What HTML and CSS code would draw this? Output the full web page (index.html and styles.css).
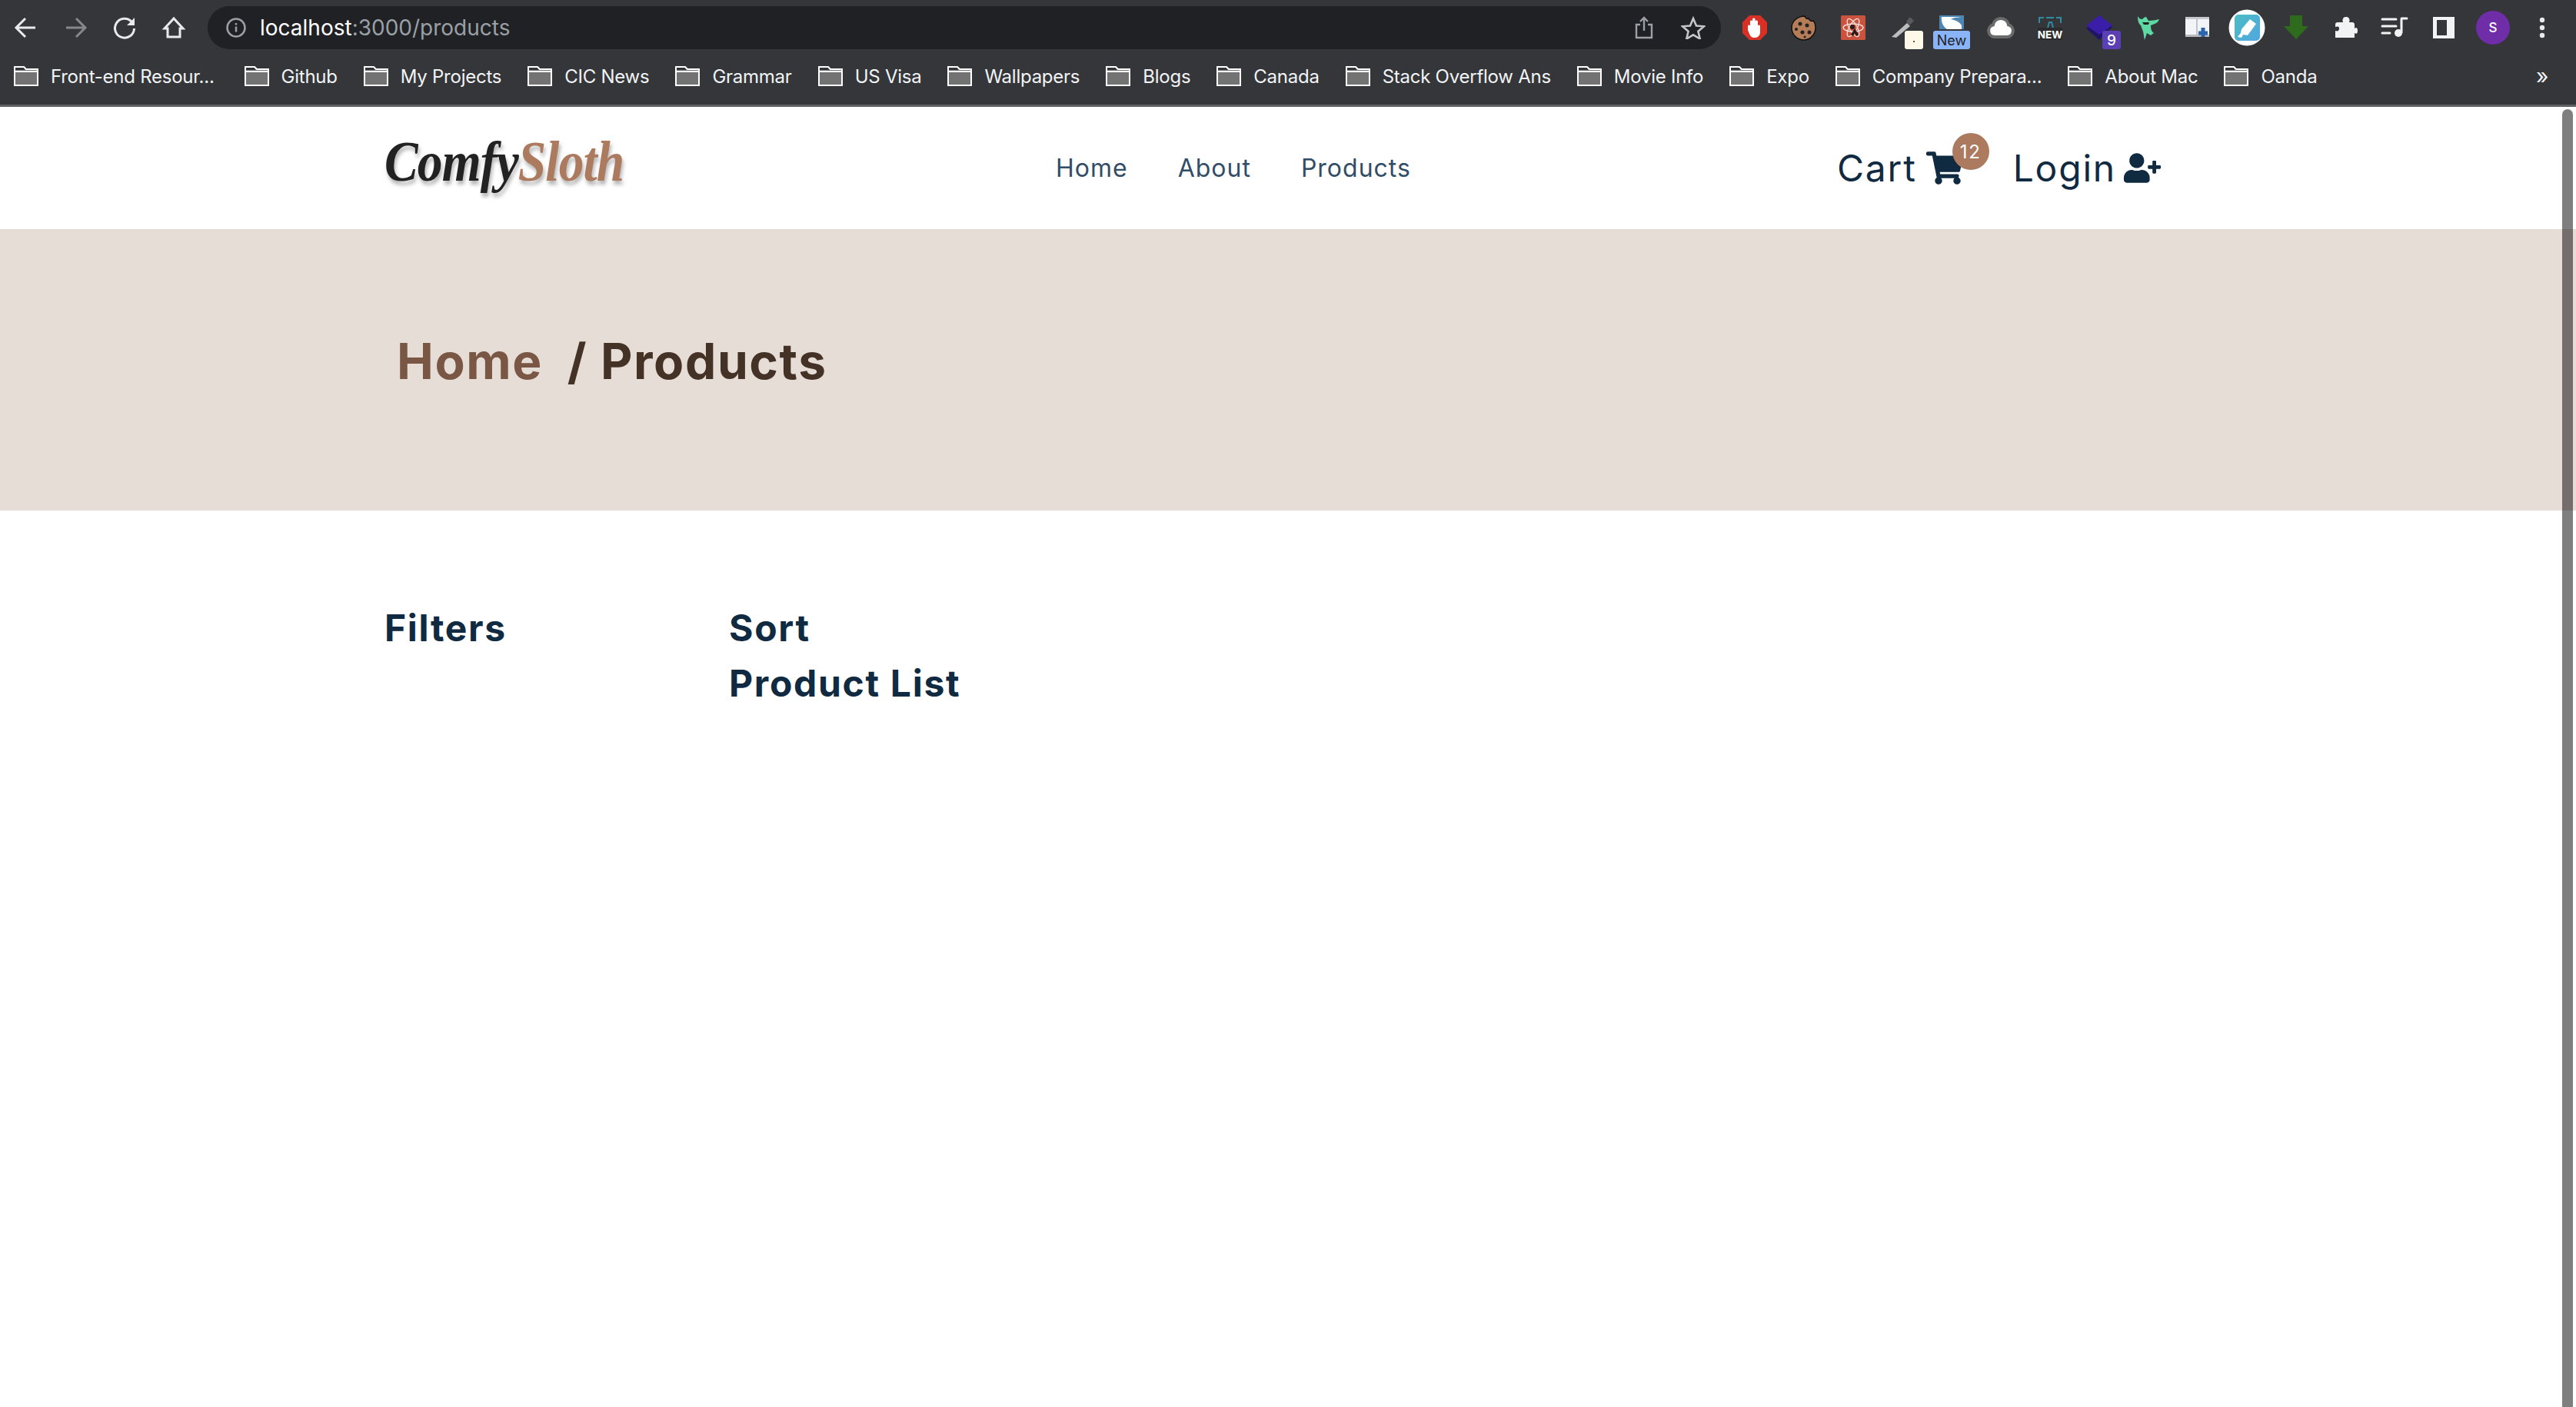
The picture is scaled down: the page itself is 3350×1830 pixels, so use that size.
FILE: index.html
```html
<!DOCTYPE html>
<html lang="en">
<head>
<meta charset="utf-8">
<title>Comfy Sloth | Products</title>
<link rel="stylesheet" href="styles.css">
</head>
<body>
<svg class="defs" width="0" height="0" aria-hidden="true">
  <symbol id="folder" viewBox="0 0 32 26">
    <path d="M1 1h12l3 3h15v21H1z" fill="#737373" stroke="#fff" stroke-width="2"/>
    <path d="M1 7h30" stroke="#fff" stroke-width="2"/>
    <path d="M2 2h10.500l2 3H2z" fill="#35363a"/>
  </symbol>
</svg>
<header class="chrome">
  <div class="toolbar">
    <div class="nav-buttons">
      <svg class="tb-icon" viewBox="0 0 64 72"><path d="M44 36H20M31 24L19 36l12 12" fill="none" stroke="#e8eaed" stroke-width="3"/></svg>
      <svg class="tb-icon" viewBox="0 0 64 72"><path d="M20 36h24M33 24l12 12-12 12" fill="none" stroke="#85878a" stroke-width="3"/></svg>
      <svg class="tb-icon" viewBox="0 0 64 72"><path d="M41 28a12.500 12.500 0 1 0 3.500 9" fill="none" stroke="#e8eaed" stroke-width="3"/><path d="M45 23v10H35z" fill="#e8eaed"/></svg>
      <svg class="tb-icon" viewBox="0 0 64 72"><path d="M20 37l12-13 12 13h-4v11H24V37z" fill="none" stroke="#e8eaed" stroke-width="3"/></svg>
    </div>
    <div class="omnibox">
      <svg class="omni-info" viewBox="0 0 28 28"><circle cx="14" cy="14" r="11.500" fill="none" stroke="#9aa0a6" stroke-width="2.500"/><path d="M14 12.500v7M14 8v2.500" stroke="#9aa0a6" stroke-width="2.500"/></svg>
      <span class="url"><span class="url-host">localhost</span>:3000/products</span>
      <svg class="omni-share" viewBox="0 0 24 30"><path d="M7 11H2v17h20V11h-5M12 19V2M7 7l5-5 5 5" fill="none" stroke="#9aa0a6" stroke-width="2.400"/></svg>
      <svg class="omni-star" viewBox="0 0 32 30"><path d="M16 3l4 9.500 10 .8-7.600 6.500 2.300 9.700L16 24.300l-8.700 5.200 2.300-9.700L2 13.300l10-.8z" fill="none" stroke="#c4c7c9" stroke-width="2.600"/></svg>
    </div>
    <div class="extensions">
      <svg class="ext" viewBox="0 0 64 72"><path d="M25 20h14l9 9v14l-9 9H25l-9-9V29z" fill="#d93025"/><path d="M23 34c0-2 3-2 3 0v-6c0-2 3-2 3 0v-3c0-2 3.500-2 3.500 0v3c0-2 3.500-2 3.500 0v6c0-2 3-2 3 0v8c0 4-3 7-7 7-4 0-6-2-7-5l-2-5z" fill="#fff"/></svg>
      <svg class="ext" viewBox="0 0 64 72"><path d="M33 21c1 3 3 4 5 3 1 3 4 4 6 3 3 3 3 6 3 9 0 9-7 16-15 16-9 0-16-7-16-16 0-8 7-15 17-15z" fill="#b47c57" stroke="#111" stroke-width="1.500"/><g fill="#222"><circle cx="27" cy="31" r="2.500"/><circle cx="36" cy="33" r="2.500"/><circle cx="22" cy="38" r="2"/><circle cx="30" cy="42" r="2.500"/><circle cx="39" cy="42" r="2.500"/><circle cx="33" cy="48" r="1.500"/></g></svg>
      <svg class="ext" viewBox="0 0 64 72"><rect x="16" y="20" width="32" height="32" rx="1.500" fill="#c9533f"/><g fill="none" stroke="#f6e3de" stroke-width="1.300"><ellipse cx="32" cy="36" rx="13" ry="5"/><ellipse cx="32" cy="36" rx="13" ry="5" transform="rotate(60 32 36)"/><ellipse cx="32" cy="36" rx="13" ry="5" transform="rotate(120 32 36)"/></g><circle cx="31" cy="35" r="3" fill="#2a1a18"/><path d="M34 37l5 8-3 2-2-4-2 4-3-2z" fill="#2a1a18"/></svg>
      <svg class="ext" viewBox="0 0 64 72"><path d="M38 30l4 4-18 15-6-1z" fill="#bdbdbd"/><path d="M37 28l5-6 5 5-6 6z" fill="#5a5a5a"/><rect class="ext-badge-cream" x="35" y="40" width="24" height="24" rx="3"/><circle cx="47" cy="54" r="1" fill="#222"/></svg>
      <svg class="ext" viewBox="0 0 64 72"><rect x="16" y="20" width="32" height="18" fill="#4e86b3"/><path d="M19 22h25c-6 1-11 1-13 3 5 1 11 3 14 8v5H26c-4-3-8-8-7-16z" fill="#fff"/><rect x="8" y="40" width="48" height="24" rx="3" fill="#8ab4f8"/><text class="ext-new" x="32" y="59" text-anchor="middle">New</text></svg>
      <svg class="ext" viewBox="0 0 64 72"><path d="M24 48a8 8 0 0 1-2-15.700c1-5 5-8.300 10-8.300s9 3.300 10 8.300A8 8 0 0 1 40 48z" fill="#fff" stroke="#6b6b6b" stroke-width="4"/></svg>
      <svg class="ext" viewBox="0 0 64 72"><path d="M18 30v-7h6M40 23h6v7M27 23h10" fill="none" stroke="#2e8ba0" stroke-width="2"/><path d="M29 36l2-7h3l2 7" fill="none" stroke="#2e8ba0" stroke-width="2"/><rect x="16" y="36" width="32" height="16" fill="#2c2c2e"/><text class="ext-word" x="32" y="49.500" text-anchor="middle">NEW</text></svg>
      <svg class="ext" viewBox="0 0 64 72"><path d="M32 20l17 15-17 17-17-15z" fill="#1f1466"/><path d="M32 20l17 13-17 12-17-12z" fill="#3a1ea8"/><rect x="36" y="40" width="24" height="24" rx="3" fill="#5b3fb5"/><text class="ext-count" x="48" y="59" text-anchor="middle">9</text></svg>
      <svg class="ext" viewBox="0 0 64 72"><path d="M18 21c2 3 3 4 6 4 2-2 3-3 5-3l3 5c5 0 9-1 14-2-1 3-3 5-6 6l-5 2c0 5 1 8 4 10l-4 3-5-3-3 9c-1-3-1-7-2-11l-3-8c-3-2-4-7-4-12z" fill="#5fd9a4"/><path d="M24 29h9l-1 3h-6z" fill="#222"/></svg>
      <svg class="ext" viewBox="0 0 64 72"><rect x="16" y="22" width="31" height="26" fill="#f2f4f8"/><rect x="16" y="22" width="31" height="3" fill="#c7c9cc"/><path d="M31 25v23" stroke="#aeb4bb" stroke-width="1.500"/><rect x="16" y="45" width="31" height="3" fill="#b8babc"/><path d="M39 36v12M33 43h12" stroke="#2a65ad" stroke-width="5"/></svg>
      <svg class="ext" viewBox="0 0 64 72"><defs><linearGradient id="pen-bg" x1="0" y1="0" x2="1" y2="1"><stop offset="0" stop-color="#4bbcc4"/><stop offset="1" stop-color="#51a7e0"/></linearGradient></defs><circle cx="32" cy="36" r="23.500" fill="#fff"/><rect x="16" y="19" width="33" height="34" rx="5" fill="url(#pen-bg)"/><path d="M36 25l8 6-11 15-6-1-2 4-5-1 4-5 1-5z" fill="#fff"/></svg>
      <svg class="ext" viewBox="0 0 64 72"><path d="M24 20h16v14h8L32 51 16 34h8z" fill="#2f6b1c"/></svg>
      <svg class="ext" viewBox="0 0 64 72"><path d="M27 29h2c-1-2-1-7 4-7s5 5 4 7h4c2 0 3 1 3 3v5c2-2 4-1 4 3s-2 4.500-4 3v6H19V40c3 1 5 0 5-3s-2-3-5-2v-3c0-2 1-3 3-3z" fill="#f1f3f4"/></svg>
      <svg class="ext" viewBox="0 0 64 72"><path d="M16 25h18M16 34h18M16 43h10" stroke="#f1f3f4" stroke-width="3" stroke-linecap="round"/><path d="M41 25v18" stroke="#f1f3f4" stroke-width="3"/><path d="M41 24h7" stroke="#f1f3f4" stroke-width="3" stroke-linecap="round"/><circle cx="37" cy="43" r="5" fill="#f1f3f4"/></svg>
      <svg class="ext" viewBox="0 0 64 72"><path fill-rule="evenodd" d="M18 22h28v28H18zM23 26v20h13V26z" fill="#f1f3f4"/></svg>
      <svg class="ext" viewBox="0 0 64 72"><circle cx="32" cy="36" r="22" fill="#6f2da8"/><text class="ext-avatar" x="32" y="42" text-anchor="middle">S</text></svg>
      <svg class="ext" viewBox="0 0 64 72"><g fill="#e8eaed"><circle cx="32" cy="26" r="3.200"/><circle cx="32" cy="36" r="3.200"/><circle cx="32" cy="46" r="3.200"/></g></svg>
    </div>
  </div>
  <nav class="bookmarks">
    <a class="bm bm-first"><svg class="folder"><use href="#folder"/></svg>Front-end Resour...</a>
    <a class="bm"><svg class="folder"><use href="#folder"/></svg>Github</a>
    <a class="bm"><svg class="folder"><use href="#folder"/></svg>My Projects</a>
    <a class="bm"><svg class="folder"><use href="#folder"/></svg>CIC News</a>
    <a class="bm"><svg class="folder"><use href="#folder"/></svg>Grammar</a>
    <a class="bm"><svg class="folder"><use href="#folder"/></svg>US Visa</a>
    <a class="bm"><svg class="folder"><use href="#folder"/></svg>Wallpapers</a>
    <a class="bm"><svg class="folder"><use href="#folder"/></svg>Blogs</a>
    <a class="bm"><svg class="folder"><use href="#folder"/></svg>Canada</a>
    <a class="bm"><svg class="folder"><use href="#folder"/></svg>Stack Overflow Ans</a>
    <a class="bm"><svg class="folder"><use href="#folder"/></svg>Movie Info</a>
    <a class="bm"><svg class="folder"><use href="#folder"/></svg>Expo</a>
    <a class="bm"><svg class="folder"><use href="#folder"/></svg>Company Prepara...</a>
    <a class="bm"><svg class="folder"><use href="#folder"/></svg>About Mac</a>
    <a class="bm"><svg class="folder"><use href="#folder"/></svg>Oanda</a>
    <span class="bm-more">»</span>
  </nav>
</header>

<div class="page">
  <div class="scrollbar"></div>
  <section class="site-nav">
    <a class="logo"><span class="logo-dark">Comfy</span><span class="logo-light">Sloth</span></a>
    <ul class="links">
      <li>Home</li>
      <li>About</li>
      <li>Products</li>
    </ul>
    <div class="actions">
      <a class="action">Cart
        <span class="cart-wrap">
          <svg class="cart-icon" viewBox="0 0 576 512"><path d="M528.12 301.319l47.273-208C578.806 78.301 567.391 64 551.99 64H159.208l-9.166-44.81C147.758 8.021 137.93 0 126.529 0H24C10.745 0 0 10.745 0 24v16c0 13.255 10.745 24 24 24h69.883l70.248 343.435C147.325 417.1 136 435.222 136 456c0 30.928 25.072 56 56 56s56-25.072 56-56c0-15.674-6.447-29.835-16.824-40h209.647C430.447 426.165 424 440.326 424 456c0 30.928 25.072 56 56 56s56-25.072 56-56c0-22.172-12.888-41.332-31.579-50.405l5.517-24.276c3.413-15.018-8.002-29.319-23.403-29.319H218.117l-6.545-32h293.145c11.206 0 20.92-7.754 23.403-18.681z"/></svg>
          <span class="cart-badge">12</span>
        </span>
      </a>
      <a class="action">Login
        <svg class="user-icon" viewBox="0 0 640 512"><path d="M624 208h-64v-64c0-8.800-7.200-16-16-16h-32c-8.800 0-16 7.200-16 16v64h-64c-8.800 0-16 7.200-16 16v32c0 8.800 7.200 16 16 16h64v64c0 8.800 7.200 16 16 16h32c8.800 0 16-7.200 16-16v-64h64c8.800 0 16-7.200 16-16v-32c0-8.800-7.200-16-16-16zm-400 48c70.700 0 128-57.300 128-128S294.700 0 224 0 96 57.300 96 128s57.300 128 128 128zm89.600 32h-16.700c-22.200 10.200-46.900 16-72.900 16s-50.600-5.800-72.900-16h-16.700C60.200 288 0 348.200 0 422.400V464c0 26.500 21.500 48 48 48h352c26.500 0 48-21.500 48-48v-41.600c0-74.200-60.200-134.400-134.400-134.400z"/></svg>
      </a>
    </div>
  </section>
  <section class="hero">
    <h1 class="crumb"><a class="crumb-link">Home</a> / Products</h1>
  </section>
  <main class="products">
    <h2 class="section-title">Filters</h2>
    <div>
      <h2 class="section-title">Sort</h2>
      <h2 class="section-title">Product List</h2>
    </div>
  </main>
</div>
</body>
</html>
```

FILE: styles.css
```css
* { box-sizing: border-box; margin: 0; padding: 0; }
html, body { height: 100%; }
body {
  height: 1830px;
  overflow: hidden;
  background: #fff;
  font-family: Inter, "Liberation Sans", sans-serif;
  color: #102a42;
  display: flex;
  flex-direction: column;
}
.defs { position: absolute; }

/* Browser chrome */
.chrome {
  height: 139px;
  flex: none;
  background: #35363a;
  border-bottom: 3px solid #5f6063;
}
.toolbar { display: flex; height: 72px; }
.nav-buttons { display: flex; width: 270px; padding-left: 2px; }
.tb-icon { width: 64px; height: 72px; flex: none; }
.omnibox {
  width: 1968px;
  height: 56px;
  margin-top: 8px;
  background: #202124;
  border-radius: 28px;
  display: flex;
  align-items: center;
  padding-left: 23px;
  padding-right: 20px;
}
.omni-info { width: 28px; height: 28px; flex: none; }
.url {
  margin-left: 17px;
  font-size: 28px;
  color: #9aa0a6;
  flex: 1;
}
.url-host { color: #fff; }
.omni-share { width: 24px; height: 30px; margin-right: 36px; }
.omni-star { width: 32px; height: 30px; }
.extensions { display: flex; margin-left: 12px; }
.ext { width: 64px; height: 72px; flex: none; overflow: visible; }
.ext-badge-cream { fill: #fdf8e8; }
.ext-new { font: 400 18px Inter, sans-serif; fill: #202124; }
.ext-word { font: 700 13.500px Inter, sans-serif; fill: #fff; }
.ext-count { font: 500 19px Inter, sans-serif; fill: #fff; }
.ext-avatar { font: 500 17px Inter, sans-serif; fill: #fff; }

.bookmarks {
  display: flex;
  align-items: center;
  height: 62px;
  padding-left: 18px;
  gap: 34px;
  font-size: 24px;
  letter-spacing: -.25px;
  color: #f1f3f4;
  position: relative;
  top: -4px;
}
.bm { display: flex; align-items: center; gap: 16px; white-space: nowrap; }
.bm-first { margin-right: 5px; }
.folder { width: 32px; height: 26px; flex: none; }
.bm-more { margin-left: auto; margin-right: 36px; font-size: 28px; }

/* Page */
.page { position: relative; flex: 1; }
.scrollbar {
  position: absolute;
  top: 3px;
  bottom: 0;
  right: 4px;
  width: 14px;
  background: rgba(0, 0, 0, .5);
  border-radius: 7px 7px 0 0;
}
.site-nav {
  height: 159px;
  padding: 0 540px 0 500px;
  display: grid;
  grid-template-columns: 873px 1fr auto;
  align-items: center;
}
.logo {
  display: inline-block;
  justify-self: start;
  margin-bottom: 16px;
  font-family: "Liberation Serif", serif;
  font-style: italic;
  font-weight: 700;
  font-size: 74px;
  letter-spacing: -1px;
  transform: scaleX(.885);
  transform-origin: left center;
  text-shadow: 2px 5px 6px rgba(0, 0, 0, .3);
}
.logo-dark { color: #222; }
.logo-light { color: #ab7a5f; font-weight: 700; }
.links {
  list-style: none;
  display: flex;
  gap: 65px;
  font-size: 32px;
  letter-spacing: 1px;
  color: #324d67;
}
.actions { display: flex; gap: 65px; font-size: 48px; letter-spacing: 1.800px; color: #102a42; }
.action { display: flex; align-items: center; gap: 12px; }
.action:last-child { gap: 10px; }
.cart-wrap { position: relative; display: flex; }
.cart-icon { width: 48px; height: 43px; fill: #102a42; }
.user-icon { width: 48px; height: 39px; fill: #102a42; }
.cart-badge {
  position: absolute;
  top: -24px;
  right: -34px;
  width: 48px;
  height: 48px;
  border-radius: 50%;
  background: #ab7a5f;
  color: #fff;
  font-size: 24px;
  letter-spacing: 1.600px;
  display: flex;
  align-items: center;
  justify-content: center;
}
.hero {
  height: 366px;
  background: #e6ddd7;
  padding: 134px 0 0 516px;
}
.crumb { font-size: 64px; font-weight: 700; letter-spacing: 1.600px; line-height: 76px; color: #453227; }
.crumb-link { color: #795744; margin-right: 15px; }
.products {
  padding: 117px 0 0 500px;
  display: grid;
  grid-template-columns: 448px 1fr;
}
.section-title { font-size: 48px; font-weight: 700; letter-spacing: 1.700px; line-height: 72px; color: #102a42; }
```
